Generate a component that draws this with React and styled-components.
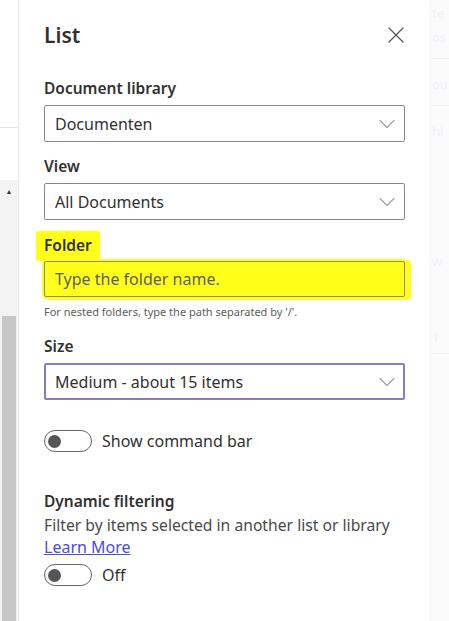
import React from 'react'
import styled, { createGlobalStyle } from 'styled-components'
import { X, ChevronDown } from 'lucide-react'

const GlobalStyle = createGlobalStyle`
  html, body {
    margin: 0;
    padding: 0;
    background: #fff;
  }
  body {
    font-family: "Noto Sans", "Open Sans", sans-serif;
    color: #323130;
  }
`

const Chevron = () => <ChevronDown size={28} strokeWidth={1} color="#a0a0a0" />

const App = () => {
  return (
    <>
      <GlobalStyle />
      <Page>
        <Rail>
          <RailTop />
          <RailGap />
          <Track>
            <Arrow>▲</Arrow>
            <Thumb />
          </Track>
        </Rail>

        <Panel>
          <Header>
            <Title>List</Title>
            <CloseBtn aria-label="Close">
              <X size={28} strokeWidth={1.05} />
            </CloseBtn>
          </Header>

          <Label>Document library</Label>
          <Select>
            <span>Documenten</span>
            <Chevron />
          </Select>

          <Label $top={14}>View</Label>
          <Select>
            <span>All Documents</span>
            <Chevron />
          </Select>

          <MarkedLabel>Folder</MarkedLabel>
          <MarkedInput>Type the folder name.</MarkedInput>
          <Hint>For nested folders, type the path separated by '/'.</Hint>

          <Label $top={18}>Size</Label>
          <Select $focused>
            <span>Medium - about 15 items</span>
            <Chevron />
          </Select>

          <ToggleRow $top={30}>
            <Toggle><Knob /></Toggle>
            <ToggleText>Show command bar</ToggleText>
          </ToggleRow>

          <Label $top={39}>Dynamic filtering</Label>
          <Desc>Filter by items selected in another list or library</Desc>
          <LearnMore href="#">Learn More</LearnMore>
          <ToggleRow $top={6}>
            <Toggle><Knob /></Toggle>
            <ToggleText>Off</ToggleText>
          </ToggleRow>
        </Panel>

        <Ghost>
          <GhostWord $top={5}>te</GhostWord>
          <GhostWord $top={8}>os</GhostWord>
          <GhostRule $top={13} />
          <GhostWord $top={17}>ou</GhostWord>
          <GhostRule $top={13} />
          <GhostWord $top={17}>hi</GhostWord>
          <GhostWord $top={114}>w</GhostWord>
          <GhostWord $top={60}>1</GhostWord>
          <GhostRule $top={8} />
        </Ghost>
      </Page>
    </>
  )
}

const Page = styled.div`
  display: flex;
  width: 449px;
  height: 621px;
  overflow: hidden;
`
const Rail = styled.div`
  flex: 0 0 19px;
  display: flex;
  flex-direction: column;
  border-right: 1px solid #ececec;
  box-sizing: border-box;
  background: #fff;
`
const RailTop = styled.div`
  height: 127px;
  border-bottom: 1px solid #e4e4e4;
`
const RailGap = styled.div`
  height: 52px;
`
const Track = styled.div`
  flex: 1;
  display: flex;
  flex-direction: column;
  align-items: center;
  background: #f3f3f3;
`
const Arrow = styled.div`
  font-size: 7px;
  color: #333;
  margin-top: 8px;
  line-height: 8px;
`
const Thumb = styled.div`
  margin-top: 120px;
  flex: 1;
  width: 14px;
  background: #c6c6c6;
`
const Panel = styled.div`
  flex: 0 0 411px;
  box-sizing: border-box;
  padding: 20px 25px 0 25px;
  display: flex;
  flex-direction: column;
  background: #fff;
`
const Header = styled.div`
  display: flex;
  align-items: center;
  justify-content: space-between;
  height: 30px;
  margin-bottom: 28px;
`
const Title = styled.h1`
  margin: 0;
  font-size: 21px;
  font-weight: 600;
  color: #323130;
`
const CloseBtn = styled.button`
  border: none;
  background: none;
  padding: 0;
  margin-right: -5px;
  color: #555;
  display: flex;
`
const Label = styled.div`
  font-size: 15.5px;
  font-weight: 600;
  line-height: 20px;
  color: #323130;
  margin-top: ${p => p.$top || 0}px;
  margin-bottom: 7px;
`
const Select = styled.div`
  height: 37px;
  box-sizing: border-box;
  border: ${p => (p.$focused ? '2px solid #8b7bb8' : '1px solid #8a8886')};
  border-radius: 2px;
  display: flex;
  align-items: center;
  justify-content: space-between;
  padding: 0 ${p => (p.$focused ? 2 : 3)}px 0 ${p => (p.$focused ? 9 : 10)}px;
  font-size: 16px;
  color: #323130;
`
const MarkedLabel = styled.div`
  align-self: flex-start;
  font-size: 15.5px;
  font-weight: 600;
  line-height: 20px;
  color: #323130;
  background: #ffff1a;
  margin: 11px 0 0 -8px;
  padding: 4px 8px 6px 8px;
  border-radius: 3px 3px 0 0;
`
const MarkedInput = styled.div`
  height: 36px;
  box-sizing: border-box;
  border: 1px solid #8a8886;
  border-radius: 2px;
  background: #ffff1a;
  box-shadow: 0 0 0 2px #ffff1a, 4px 1px 0 2px #ffff1a;
  display: flex;
  align-items: center;
  padding-left: 10px;
  font-size: 16px;
  color: #605e5c;
`
const Hint = styled.div`
  margin-top: 9px;
  font-size: 11px;
  line-height: 12px;
  color: #605e5c;
`
const ToggleRow = styled.div`
  display: flex;
  align-items: center;
  gap: 10px;
  margin-top: ${p => p.$top}px;
`
const Toggle = styled.div`
  width: 48px;
  height: 22px;
  box-sizing: border-box;
  border: 1.5px solid #666;
  border-radius: 11px;
  display: flex;
  align-items: center;
  padding-left: 3px;
`
const Knob = styled.div`
  width: 13px;
  height: 13px;
  border-radius: 50%;
  background: #555;
`
const ToggleText = styled.span`
  font-size: 16px;
  color: #323130;
`
const Desc = styled.div`
  font-size: 15.7px;
  line-height: 22px;
  color: #4a4a4a;
  margin-top: -4px;
  white-space: nowrap;
`
const LearnMore = styled.a`
  align-self: flex-start;
  font-size: 16px;
  line-height: 22px;
  color: #4b4bdc;
  text-decoration: underline;
`
const Ghost = styled.div`
  flex: 1;
  min-width: 0;
  overflow: hidden;
  background: #fbfbfc;
  display: flex;
  flex-direction: column;
  padding-left: 1px;
  border-left: 1px solid #f5f5f7;
`
const GhostWord = styled.div`
  font-size: 13px;
  line-height: 16px;
  color: #eef1f8;
  margin-top: ${p => p.$top}px;
  white-space: nowrap;
`
const GhostRule = styled.div`
  height: 1px;
  background: #f1f1f3;
  margin-top: ${p => p.$top}px;
`

export default App
